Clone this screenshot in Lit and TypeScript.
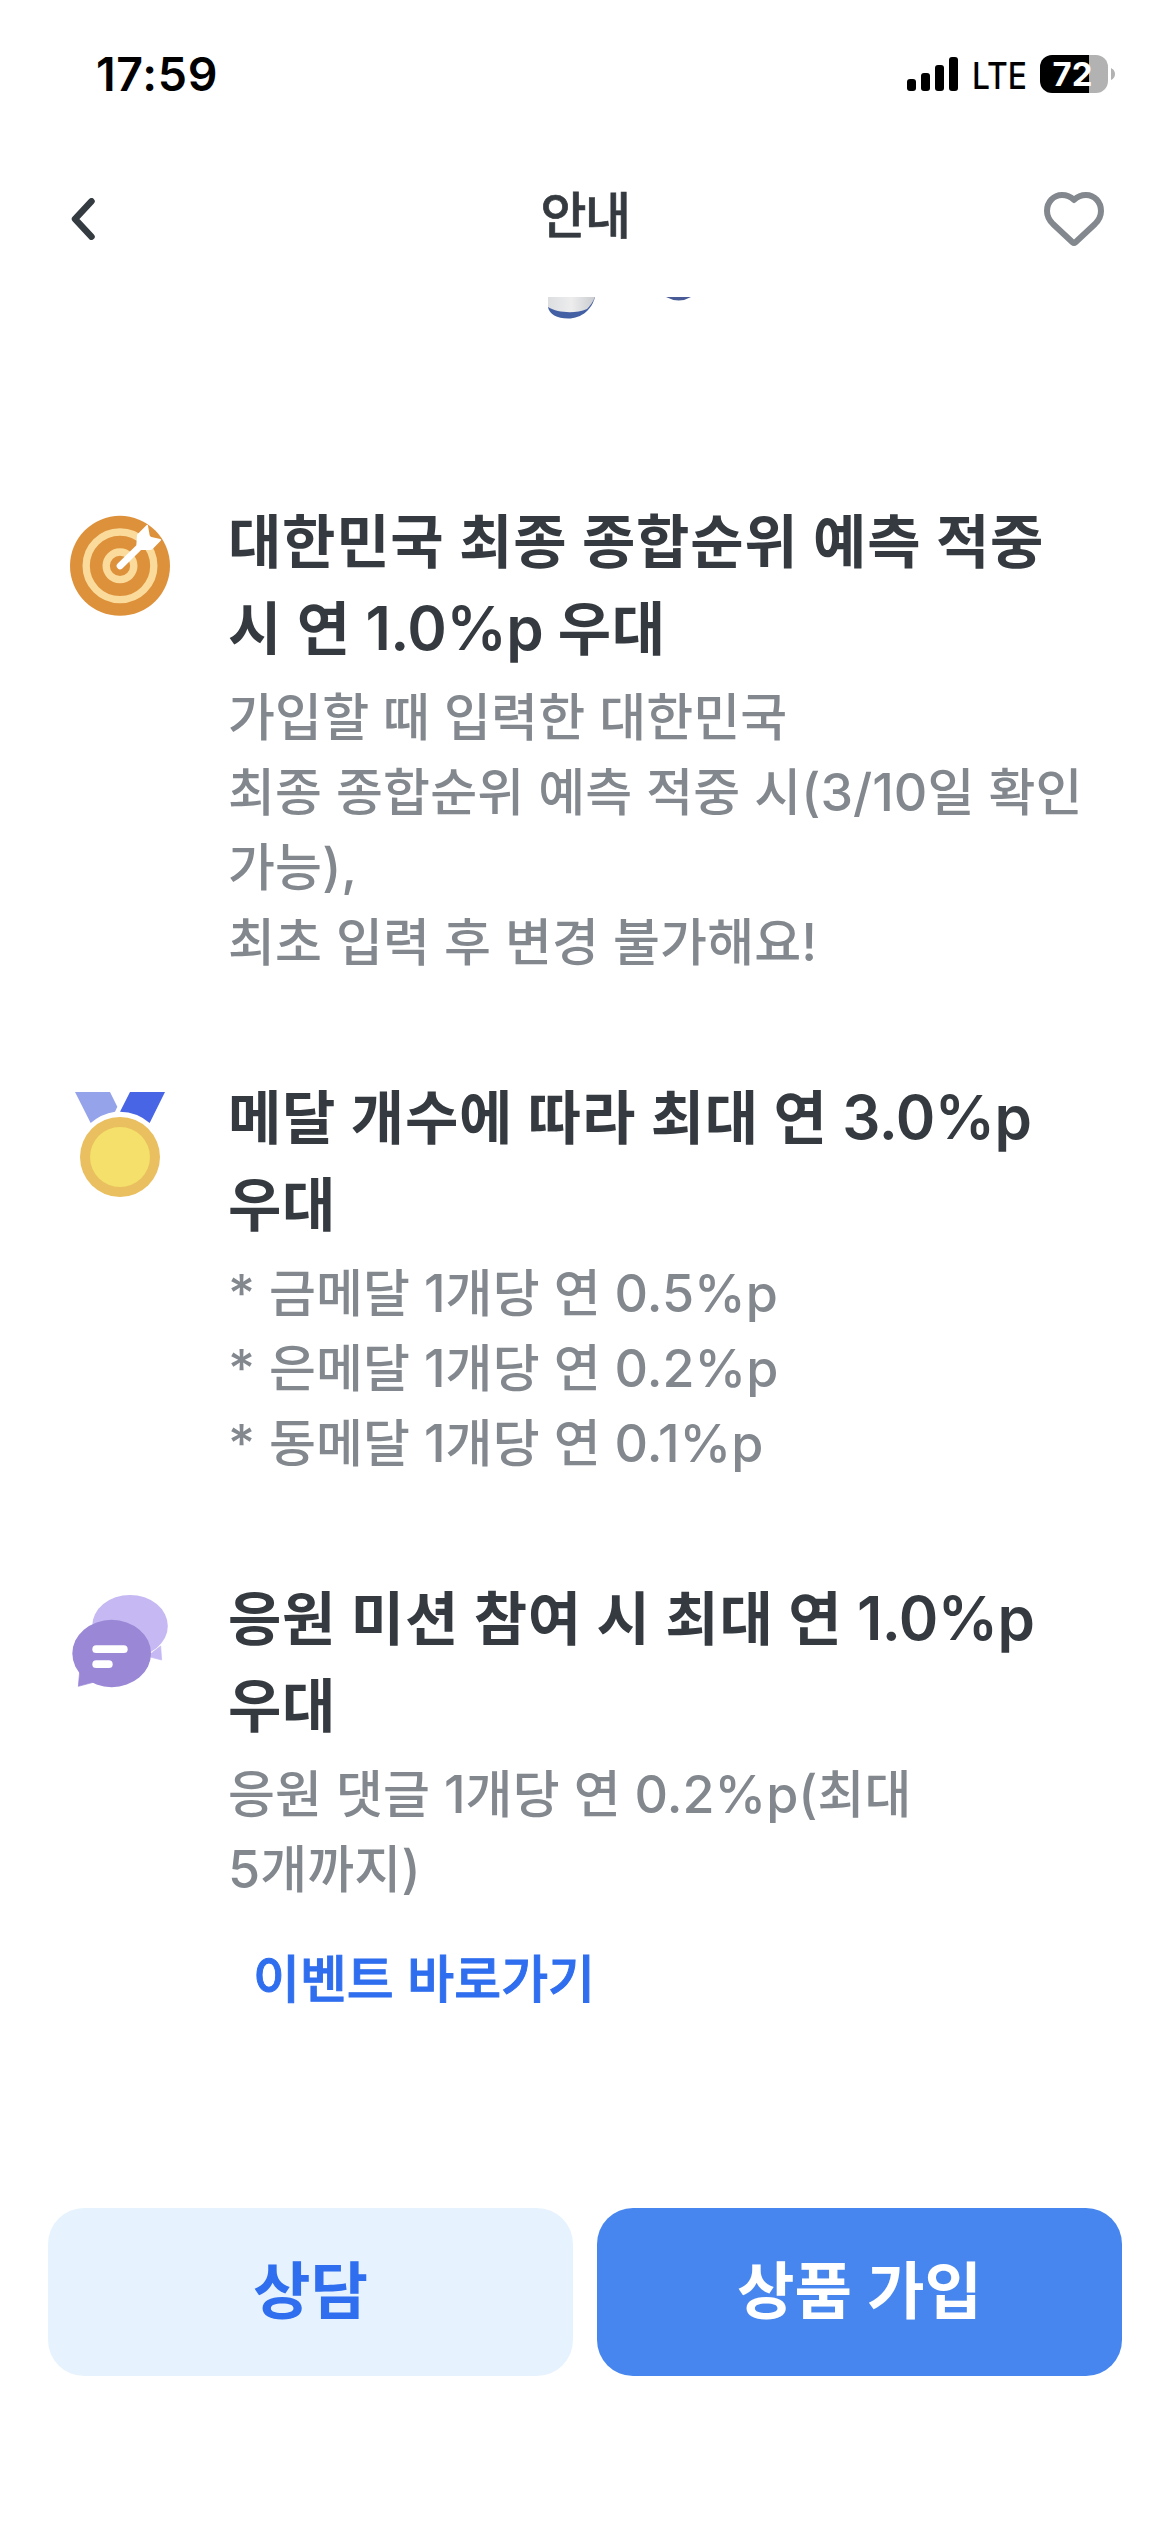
import { LitElement, html, css } from "lit";
import { customElement, property } from "lit/decorators.js";

const HANGUL = /([\u3131-\uD79D]+)/;

/** Splits a line into Hangul and Latin runs, since each script is set at its own size. */
const runs = (text: string) =>
  text.split(HANGUL).map((part, i) => (i % 2 ? html`<span class="ko">${part}</span>` : part));

interface Benefit {
  icon: "target" | "medal" | "chat";
  title: string[];
  lines: string[];
  link?: string;
}

const BENEFITS: Benefit[] = [
  {
    icon: "target",
    title: ["대한민국 최종 종합순위 예측 적중", "시 연 1.0%p 우대"],
    lines: [
      "가입할 때 입력한 대한민국",
      "최종 종합순위 예측 적중 시(3/10일 확인",
      "가능),",
      "최초 입력 후 변경 불가해요!",
    ],
  },
  {
    icon: "medal",
    title: ["메달 개수에 따라 최대 연 3.0%p", "우대"],
    lines: ["* 금메달 1개당 연 0.5%p", "* 은메달 1개당 연 0.2%p", "* 동메달 1개당 연 0.1%p"],
  },
  {
    icon: "chat",
    title: ["응원 미션 참여 시 최대 연 1.0%p", "우대"],
    lines: ["응원 댓글 1개당 연 0.2%p(최대", "5개까지)"],
    link: "이벤트 바로가기",
  },
];

const ICONS = {
  target: html`<svg class="icon" viewBox="60 24 300 360">
    <circle cx="210" cy="227.500" r="150" fill="#de913b" />
    <circle cx="210" cy="227.500" r="101.500" fill="none" stroke="#fadb9c" stroke-width="22" />
    <circle cx="210" cy="227.500" r="41.500" fill="none" stroke="#fadb9c" stroke-width="22" />
    <path d="M210 228 L270 169" stroke="#fff" stroke-width="20" stroke-linecap="round" />
    <path
      d="M261 134 L290 105 Q293 103 294 107 L299 136 Q300 140 304 141 L331 147 Q336 149 332 152 L308 177 Q305 180 300 180 L274 180 L259 166 Z"
      fill="#fff"
    />
  </svg>`,
  medal: html`<svg class="icon" viewBox="60 12 300 360">
    <path d="M75 66 H180 L202 110 L195 125 Q154 131 122 159 Z" fill="#95a3eb" />
    <path d="M240 66 H345 L299 159 Q262 126 210 125 Z" fill="#4865e6" />
    <circle cx="210" cy="261" r="120" fill="#e9bf5f" />
    <circle cx="210" cy="261" r="90" fill="#f4e06a" />
  </svg>`,
  chat: html`<svg class="icon" viewBox="60 15 300 360">
    <ellipse cx="240" cy="168" rx="113.500" ry="93" fill="#c6b9f3" />
    <path d="M332 228 L335 270 L292 259 Z" fill="#c6b9f3" stroke="#c6b9f3" stroke-width="2" />
    <ellipse cx="185" cy="250.500" rx="118" ry="101" fill="#9a87d6" />
    <path d="M89 305 L85 349 L130 337 Z" fill="#9a87d6" stroke="#9a87d6" stroke-width="2" />
    <rect x="127" y="226" width="106" height="23" rx="11.500" fill="#fff" />
    <rect x="127" y="271" width="61" height="23" rx="11.500" fill="#fff" />
  </svg>`,
};

@customElement("status-bar")
class StatusBar extends LitElement {
  @property({ type: Number }) battery = 72;

  static styles = css`
    :host {
      display: flex;
      justify-content: space-between;
      align-items: center;
      height: 150px;
      box-sizing: border-box;
      padding: 0 55px 2px 96px;
      color: #000;
    }
    .time {
      font-size: 46.5px;
      font-weight: 600;
      letter-spacing: 0.7px;
    }
    .right {
      display: flex;
      align-items: center;
    }
    .signal {
      width: 51px;
      height: 34px;
      margin-right: 14px;
    }
    .network {
      width: 55px;
      margin-right: 13px;
      padding-top: 3px;
      font-size: 37px;
      font-weight: 450;
      transform: scaleX(0.86);
      transform-origin: left center;
    }
    .battery {
      display: grid;
      place-items: center;
      width: 68px;
      height: 38px;
      box-sizing: border-box;
      padding-right: 3px;
      border-radius: 12px;
      color: #fff;
      font-size: 33px;
      font-weight: 700;
      line-height: 38px;
    }
    .cap {
      width: 4px;
      height: 12px;
      margin-left: 3px;
    }
  `;

  render() {
    return html`
      <span class="time">17:59</span>
      <div class="right">
        <svg class="signal" viewBox="0 0 51 34">
          <rect x="0" y="22" width="9" height="12" rx="3" />
          <rect x="14" y="16" width="9" height="18" rx="3" />
          <rect x="28" y="8" width="9" height="26" rx="3" />
          <rect x="42" y="0" width="9" height="34" rx="3" />
        </svg>
        <span class="network">LTE</span>
        <span
          class="battery"
          style="background:linear-gradient(90deg,#000 ${this.battery}%,#b2b2b2 ${this.battery}%)"
          >${this.battery}</span
        >
        <svg class="cap" viewBox="0 0 4 12">
          <path d="M0 0 Q4 2 4 6 Q4 10 0 12 Z" fill="#b2b2b2" />
        </svg>
      </div>
    `;
  }
}

@customElement("benefit-item")
class BenefitItem extends LitElement {
  @property({ attribute: false }) item!: Benefit;

  static styles = css`
    :host {
      display: flex;
      gap: 58px;
    }
    .icon {
      flex: none;
      display: block;
      width: 100px;
      height: 120px;
      overflow: visible;
    }
    .text {
      display: flex;
      flex-direction: column;
      white-space: nowrap;
    }
    h2,
    p {
      margin: 0;
    }
    h2 {
      margin-bottom: 8px;
      color: #343a3f;
      font-size: 60px;
      font-weight: 600;
      line-height: 87px;
      letter-spacing: -0.5px;
    }
    h2 .ko {
      font-size: 58px;
      letter-spacing: 0.75px;
    }
    p {
      color: #82888e;
      font-size: 52px;
      font-weight: 500;
      line-height: 75px;
    }
    p .ko {
      font-size: 51px;
      letter-spacing: 0.15px;
    }
    .line {
      display: block;
    }
    .ko {
      line-height: 0;
    }
    .link {
      margin: 35px 0 0 25px;
      color: #2f6eee;
      font-size: 51px;
      font-weight: 500;
      line-height: 75px;
      text-decoration: none;
      -webkit-text-stroke: 1px #2f6eee;
    }
  `;

  render() {
    const { icon, title, lines, link } = this.item;
    return html`
      ${ICONS[icon]}
      <div class="text">
        <h2>${title.map((t) => html`<span class="line">${runs(t)}</span>`)}</h2>
        <p>${lines.map((t) => html`<span class="line">${runs(t)}</span>`)}</p>
        ${link ? html`<a class="link">${link}</a>` : null}
      </div>
    `;
  }
}

@customElement("app-root")
class AppRoot extends LitElement {
  static styles = css`
    :host {
      display: flex;
      flex-direction: column;
      width: 1170px;
      height: 2532px;
      overflow: hidden;
      background: #fff;
      font-family: Inter, "Noto Sans CJK KR", sans-serif;
    }
    .nav {
      display: grid;
      grid-template-columns: 55px 1fr 60px;
      align-items: center;
      height: 147px;
      box-sizing: border-box;
      padding: 0 66px 9px 71px;
      color: #343a3f;
    }
    .back {
      width: 24px;
      height: 42px;
    }
    .heart {
      width: 60px;
      height: 54px;
    }
    h1 {
      margin: 0 0 6px;
      font-size: 50px;
      font-weight: 500;
      line-height: 72px;
      letter-spacing: -1.5px;
      text-align: center;
      -webkit-text-stroke: 0.7px #343a3f;
    }
    .hero {
      display: block;
      width: 180px;
      height: 33px;
      margin: 0 0 168px 530px;
    }
    .list {
      display: flex;
      flex-direction: column;
      flex: 1;
      gap: 94px;
      padding-left: 70px;
    }
    .actions {
      display: grid;
      grid-template-columns: 1fr 1fr;
      gap: 24px;
      padding: 0 48px 156px;
    }
    .button {
      height: 168px;
      border: 0;
      border-radius: 36px;
      font: 700 62.5px/166px Inter, "Noto Sans CJK KR", sans-serif;
      background: #e6f3fe;
      color: #2f6eee;
      padding: 0 0 2px;
    }
    .primary {
      background: #4686ee;
      color: #fff;
    }
  `;

  render() {
    return html`
      <status-bar></status-bar>
      <header class="nav">
        <svg
          class="back"
          viewBox="0 0 24 42"
          fill="none"
          stroke="#353c41"
          stroke-width="6.500"
          stroke-linecap="round"
          stroke-linejoin="round"
        >
          <path d="M20.500 3.300 L4 21 L20.500 38.700" />
        </svg>
        <h1>안내</h1>
        <svg
          class="heart"
          viewBox="0 0 60 54"
          fill="none"
          stroke="#82888e"
          stroke-width="6"
          stroke-linejoin="round"
        >
          <path
            d="M30 8 C27 5 22.500 3 18 3 C9.500 3 3 10 3 19 C3 24 5 28 9 32 L28.500 50.200 Q30 51.500 31.500 50.200 L51 32 C55 28 57 24 57 19 C57 10 50.500 3 42 3 C37.500 3 33 5 30 8 Z"
          />
        </svg>
      </header>
      <svg class="hero" viewBox="0 0 180 33">
        <defs>
          <linearGradient id="shade" x1="0" x2="1">
            <stop offset="0" stop-color="#dcdee0" />
            <stop offset=".5" stop-color="#ededee" />
            <stop offset="1" stop-color="#c9cbce" />
          </linearGradient>
        </defs>
        <path d="M18 0 H65 C62 12 52 21.500 38 21.500 C27 21.500 19 17 18 10 Z" fill="#4460a4" />
        <path d="M18 0 H65 C63 5 60 9 57 12 C45 17 28 16 18 10 Z" fill="url(#shade)" />
        <path d="M136 0 H161 Q149 7 136 0 Z" fill="#485b96" />
      </svg>
      <main class="list">
        ${BENEFITS.map((b) => html`<benefit-item .item=${b}></benefit-item>`)}
      </main>
      <footer class="actions">
        <button class="button">상담</button>
        <button class="button primary">상품 가입</button>
      </footer>
    `;
  }
}
